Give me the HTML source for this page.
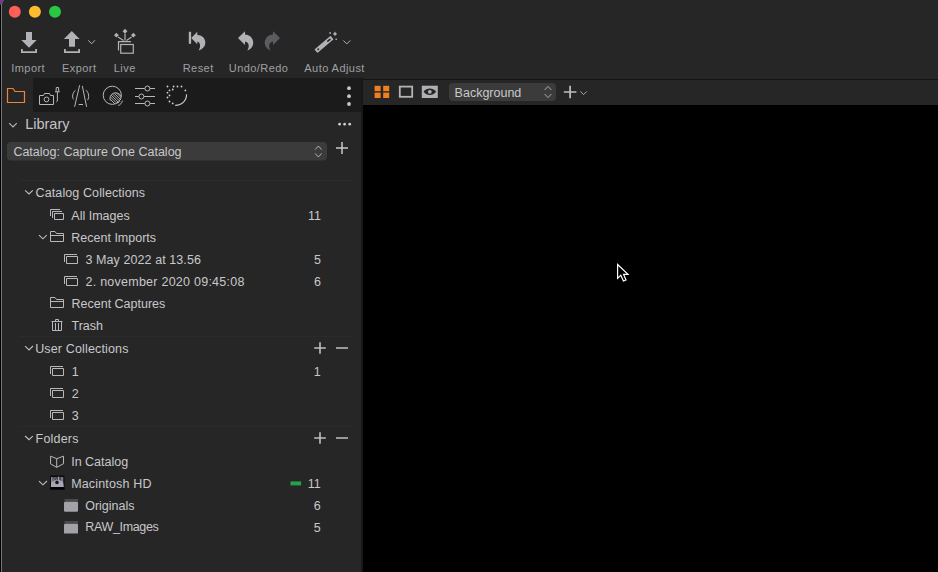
<!DOCTYPE html>
<html><head><meta charset="utf-8">
<style>
html,body{margin:0;padding:0;width:938px;height:572px;overflow:hidden;background:#262626;}
svg{display:block;}
text{font-family:"Liberation Sans",sans-serif;}
.lbl{font-size:11px;fill:#a0a0a4;letter-spacing:0.45px;}
.it{font-size:12.5px;fill:#c8c8cb;}
.ic{fill:none;stroke:#b8b8bc;stroke-width:1;}
</style></head>
<body>
<svg width="938" height="572" viewBox="0 0 938 572">
<!-- backgrounds -->
<rect x="0" y="0" width="938" height="572" fill="#262626"/>
<!-- left window edge -->
<rect x="0" y="5" width="1" height="567" fill="#000"/>
<rect x="1" y="5" width="1" height="567" fill="#74747c"/>
<path d="M0,0 H2.8 Q1,2 0,5.5 Z" fill="#8a2aa8"/>
<path d="M3.5,0 Q1.5,2 1.5,5" fill="none" stroke="#74747c" stroke-width="1"/>
<!-- traffic lights -->
<circle cx="14.8" cy="11.8" r="6" fill="#fe5f57"/>
<circle cx="34.9" cy="11.8" r="6" fill="#febc2e"/>
<circle cx="55" cy="11.8" r="6" fill="#28c840"/>

<!-- toolbar icons -->
<g fill="#b2b2b6">
  <!-- import -->
  <rect x="26" y="32" width="6" height="8.5"/>
  <polygon points="21.3,40 36.7,40 29,47.8"/>
  <path d="M21,49 H22.8 V51.2 H35.2 V49 H37 V53 H21 Z"/>
  <!-- export -->
  <polygon points="71.8,31 63.9,39 79.6,39"/>
  <rect x="69" y="38.5" width="6" height="8.2"/>
  <path d="M64,49 H65.8 V51.2 H78.2 V49 H80 V53 H64 Z"/>
</g>
<path d="M88.3,40.3 L91.6,43.8 L94.9,40.3" fill="none" stroke="#b2b2b6" stroke-width="1"/>
<!-- live -->
<g fill="#b2b2b6" stroke="none">
  <polygon points="125,28.8 127.4,31.3 125,33.8 122.6,31.3"/>
  <polygon points="116.4,32.8 118.8,35.2 116.4,37.6 114,35.2"/>
  <polygon points="133.4,32.8 135.8,35.2 133.4,37.6 131,35.2"/>
</g>
<g stroke="#b2b2b6" stroke-width="1.2" fill="none">
  <path d="M125,33.8 V40.5 M118,37 L123.5,40.5 M131.6,37 L126.5,40.5"/>
  <path d="M118.5,50.5 V41.7 H131"/>
  <rect x="120.7" y="44.5" width="12.6" height="8.7"/>
</g>
<!-- reset -->
<g fill="#b2b2b6">
  <rect x="188.8" y="31.8" width="2.3" height="12"/>
  <path d="M191.2,38 L197.3,31.7 L197.3,35 C203,35 206,39.5 205.2,44 C204.6,47.2 202,49.6 198.7,50.6 C200.8,47 200.6,42.6 197.3,41.6 L197.3,44.3 Z"/>
  <!-- undo -->
  <path d="M238,38 L245,31.2 L245,34.6 C250.5,34.9 253.8,39.3 253.2,43.8 C252.7,47 250.4,49.5 247.3,50.5 C249.6,47.2 249.4,42.4 245,41.6 L245,45 Z"/>
</g>
<!-- redo -->
<path fill="#5c5c60" d="M280,38 L273,31.2 L273,34.6 C267.5,34.9 264.2,39.3 264.8,43.8 C265.3,47 267.6,49.5 270.7,50.5 C268.4,47.2 268.6,42.4 273,41.6 L273,45 Z"/>
<!-- auto adjust wand -->
<g transform="translate(324,44.4) rotate(-40)">
  <rect x="-10.6" y="-2.3" width="21.2" height="4.6" rx="0.8" fill="#b2b2b6"/>
  <rect x="-8.6" y="-0.8" width="2.2" height="1.6" rx="0.8" fill="#262626"/>
  <rect x="4.2" y="-0.8" width="4.4" height="1.6" rx="0.8" fill="#262626"/>
</g>
<path d="M335,31.6 L335.9,33 L337.3,33.9 L335.9,34.8 L335,36.2 L334.1,34.8 L332.7,33.9 L334.1,33 Z" fill="#b2b2b6"/>
<rect x="329.3" y="32.2" width="1.6" height="1.6" fill="#b2b2b6"/>
<rect x="335.5" y="38.6" width="1.4" height="1.4" fill="#b2b2b6"/>
<path d="M343.3,40.4 L346.8,43.9 L350.3,40.4" fill="none" stroke="#b2b2b6" stroke-width="1"/>

<!-- toolbar labels -->
<text class="lbl" x="28.2" y="71.6" text-anchor="middle">Import</text>
<text class="lbl" x="79.2" y="71.6" text-anchor="middle">Export</text>
<text class="lbl" x="124.8" y="71.6" text-anchor="middle">Live</text>
<text class="lbl" x="198.2" y="71.6" text-anchor="middle">Reset</text>
<text class="lbl" x="258.6" y="71.6" text-anchor="middle">Undo/Redo</text>
<text class="lbl" x="334.6" y="71.6" text-anchor="middle">Auto Adjust</text>

<!-- tool tab row -->
<rect x="33" y="78" width="328" height="34" fill="#1b1b1b"/>
<!-- folder tab (selected) -->
<path d="M7.5,102.5 V88.5 H13 L15,91.5 H24.5 V102.5 Z" fill="none" stroke="#ee8236" stroke-width="1.2"/>
<!-- camera + pin -->
<g class="ic" stroke="#c4c4ca">
  <path d="M39.5,104.5 V95.5 H43.5 L44.5,93.5 H49.5 L50.5,95.5 H53.5 V104.5 Z" stroke-linejoin="round"/>
  <circle cx="46.5" cy="99.4" r="2.4"/>
  <path d="M55,91.8 H59.8 M56,91.8 L56.3,87.5 H58.5 L58.8,91.8 M57.4,92 V101 L56.3,101.9"/>
</g>
<!-- lens -->
<g class="ic" stroke="#c4c4ca">
  <path d="M79.6,85.2 L74.6,106.8 M82.3,85.9 L86.6,106.8 M78.7,104.5 H83"/>
  <path d="M75.5,90.2 C72.6,92.5 71.8,97 73.5,99.3 M86,90.2 C88.8,92.5 89.6,97.5 87.5,100.2"/>
</g>
<!-- color -->
<g class="ic" stroke="#c4c4ca">
  <circle cx="112.3" cy="95.3" r="9.1"/>
  <clipPath id="hc"><circle cx="115.7" cy="98.6" r="5.5"/></clipPath>
  <g clip-path="url(#hc)" stroke-width="0.9"><path d="M108,92 L124,108 M108,89.5 L126,107.5 M108,87 L128,107 M108,94.5 L122,108.5 M108,97 L120,109 M111,87.5 L128,104.5 M113.5,87.5 L128,102 M116,87.5 L128,99.5"/></g>
  <path d="M110.3,100.5 A5.7,5.7 0 0 1 121,96.5" />
  <path d="M122.5,100.7 C121.8,103 120.4,104.8 118.2,105.5"/>
</g>
<!-- sliders -->
<g class="ic" stroke="#c4c4ca">
  <path d="M135,88.5 H144.8 M150,88.5 H155 M135,96.5 H138.8 M144,96.5 H155 M135,103.5 H144.8 M150,103.5 H155"/>
  <circle cx="147.4" cy="88.5" r="2.5"/>
  <circle cx="141.4" cy="96.5" r="2.5"/>
  <circle cx="147.4" cy="103.5" r="2.5"/>
</g>
<!-- dotted circle -->
<g fill="#d0d0d6">
  <circle cx="167.5" cy="86.5" r="0.9"/><circle cx="173.6" cy="86.5" r="0.9"/><circle cx="177.5" cy="86.5" r="0.9"/><circle cx="181.5" cy="86.5" r="0.9"/>
  <circle cx="185.4" cy="90.4" r="0.9"/><circle cx="172.7" cy="89.5" r="0.9"/><circle cx="169.5" cy="90.4" r="0.9"/>
  <circle cx="167.5" cy="92.7" r="0.9"/><circle cx="169.5" cy="95.4" r="0.9"/><circle cx="167.5" cy="97.5" r="0.9"/>
  <circle cx="169.5" cy="101.5" r="0.9"/><circle cx="172.7" cy="103.4" r="0.9"/>
</g>
<path d="M186.5,94.3 C186.8,100.5 182,105.4 175.2,105.4" fill="none" stroke="#c8c8ce" stroke-width="1.1"/>
<!-- vertical menu dots -->
<g fill="#c8c8cc"><circle cx="349" cy="88.2" r="1.9"/><circle cx="349" cy="96.2" r="1.9"/><circle cx="349" cy="104" r="1.9"/></g>

<!-- library header -->
<path d="M9.2,123.2 L13,127 L16.8,123.2" fill="none" stroke="#b8b8bc" stroke-width="1.1"/>
<text x="25.2" y="129.2" style="font-size:14.5px;fill:#c2c2c6">Library</text>
<g fill="#d0d0d4"><circle cx="339.6" cy="124.2" r="1.35"/><circle cx="344.6" cy="124.2" r="1.35"/><circle cx="349.7" cy="124.2" r="1.35"/></g>

<!-- catalog dropdown -->
<rect x="7" y="142" width="320" height="18.5" rx="4" fill="#3b3b3b"/>
<text class="it" x="13.4" y="155.9">Catalog: Capture One Catalog</text>
<path d="M315.2,149.6 L318.4,146 L321.6,149.6 M315.2,153.4 L318.4,157 L321.6,153.4" fill="none" stroke="#b0b0b4" stroke-width="1"/>
<path d="M342,142 V154 M336,148 H348" stroke="#c8c8cc" stroke-width="1.5"/>

<!-- separators -->
<g fill="#2b2b2b">
  <rect x="20" y="180" width="333" height="1"/>
  <rect x="20" y="336" width="333" height="1"/>
  <rect x="20" y="426" width="333" height="1"/>
</g>

<!-- catalog collections -->
<g fill="none" stroke="#c0c0c4" stroke-width="1.1">
  <path d="M25.1,190.3 L29,194 L32.8,190.3"/>
  <path d="M39,235.1 L42.9,238.8 L46.7,235.1"/>
  <path d="M25.1,346.1 L29,349.9 L33,346"/>
  <path d="M25.1,436 L29,439.7 L32.8,436.1"/>
  <path d="M39,481.2 L42.9,484.8 L47,481"/>
</g>
<text class="it" x="35.6" y="196.9" letter-spacing="0.1">Catalog Collections</text>

<!-- icons for rows -->
<g class="ic" stroke="#bebec2">
  <!-- all images (stacked) -->
  <path d="M50.5,216 V209.5 H60 M52.5,218 V211.5 H62"/>
  <path d="M54.5,213.5 H63.5 V219.5 H54.5 Z"/>
  <!-- recent imports folder -->
  <path d="M50.5,241.5 V231.5 H55 L56.5,233.5 H63.5 V241.5 Z M50.5,235.5 H63.5"/>
  <!-- 3 may -->
  <path d="M64.5,262 V254.5 H77 M66.5,256.5 H77.5 V263.5 H66.5 Z"/>
  <!-- 2 november -->
  <path d="M64.5,284 V276.5 H77 M66.5,278.5 H77.5 V285.5 H66.5 Z"/>
  <!-- recent captures folder -->
  <path d="M50.5,307.5 V297.5 H55 L56.5,299.5 H63.5 V307.5 Z M50.5,301.5 H63.5"/>
  <!-- trash -->
  <path d="M51.5,321.5 H62.5 M55.5,321.5 V319.5 H58.5 V321.5 M52.5,321.5 V330.5 H61.5 V321.5 M55.5,323 V330 M58.5,323 V330"/>
  <!-- user collections 1,2,3 -->
  <path d="M50.5,374 V366.5 H63 M52.5,368.5 H63.5 V375.5 H52.5 Z"/>
  <path d="M50.5,396 V388.5 H63 M52.5,390.5 H63.5 V397.5 H52.5 Z"/>
  <path d="M50.5,418 V410.5 H63 M52.5,412.5 H63.5 V419.5 H52.5 Z"/>
  <!-- in catalog (book) -->
  <path d="M50.6,456.2 L56.7,458.7 L63.5,456.2 V463.7 L56.7,467.4 L50.6,463.9 Z M56.7,458.7 V467.4" stroke-linejoin="round"/>
</g>
<text class="it" x="71.3" y="219.8">All Images</text>
<text class="it" x="71.3" y="241.6">Recent Imports</text>
<text class="it" x="85.5" y="263.9" letter-spacing="0.08">3 May 2022 at 13.56</text>
<text class="it" x="85.5" y="286.1" letter-spacing="0.25">2. november 2020 09:45:08</text>
<text class="it" x="71.5" y="308">Recent Captures</text>
<text class="it" x="71.5" y="329.5">Trash</text>

<text class="it" x="321" y="219.8" text-anchor="end">11</text>
<text class="it" x="321" y="263.9" text-anchor="end">5</text>
<text class="it" x="321" y="286.1" text-anchor="end">6</text>

<!-- user collections -->
<text class="it" x="35.2" y="353" letter-spacing="0.15">User Collections</text>
<path d="M320,342.2 V353.8 M314.2,348 H325.8 M336,348 H348" stroke="#c0c0c4" stroke-width="1.6"/>
<text class="it" x="71.8" y="376.1">1</text>
<text class="it" x="71.8" y="397.9">2</text>
<text class="it" x="71.8" y="419.6">3</text>
<text class="it" x="320.6" y="376.1" text-anchor="end">1</text>

<!-- folders -->
<text class="it" x="35.6" y="443.1" letter-spacing="0.2">Folders</text>
<path d="M320,432.2 V443.8 M314.2,438 H325.8 M336,438 H348" stroke="#c0c0c4" stroke-width="1.6"/>
<text class="it" x="71.2" y="466.2">In Catalog</text>
<!-- macintosh hd icon -->
<rect x="50" y="475.5" width="14.5" height="14" fill="#0a0a0a"/>
<path d="M51,487 V477 H63.5 V487 Z" fill="#4a4a52"/>
<path d="M50.8,487 L51.5,482 L55,480 H59.5 L63,482 L63.8,487 Z" fill="#a4a4b4"/>
<path d="M51.8,477 V487 M58.6,476.5 V481 M62,477 V487" stroke="#b0b0bc" stroke-width="0.9"/>
<path d="M52.5,480.5 L55.5,477.5 M53,483 L57,479" stroke="#9090a0" stroke-width="0.7"/>
<circle cx="57" cy="482.4" r="1.8" fill="#16161a"/>
<rect x="50" y="487.2" width="14.5" height="2.3" fill="#000"/>
<text class="it" x="71.2" y="488.2" letter-spacing="0.16">Macintosh HD</text>
<rect x="290.5" y="481.4" width="10.6" height="4" fill="#26a04c"/>
<text class="it" x="320.8" y="487.5" text-anchor="end">11</text>
<!-- gray folders -->
<rect x="64.5" y="499" width="13.5" height="2.6" fill="#4a4a4e"/>
<rect x="64" y="501.8" width="14" height="10" rx="1.2" fill="#a2a2a8"/>
<rect x="64.5" y="521" width="13.5" height="2.6" fill="#4a4a4e"/>
<rect x="64" y="523.8" width="14" height="9.8" rx="1.2" fill="#a2a2a8"/>
<text class="it" x="85.2" y="510.2">Originals</text>
<text class="it" x="85.2" y="531.2" letter-spacing="-0.33">RAW_Images</text>
<text class="it" x="320.8" y="509.5" text-anchor="end">6</text>
<text class="it" x="320.8" y="531.6" text-anchor="end">5</text>

<!-- viewer -->
<rect x="361" y="78" width="2" height="494" fill="#171717"/>
<rect x="363" y="79" width="575" height="1" fill="#141414"/>
<rect x="363" y="105" width="575" height="467" fill="#000"/>
<!-- grid icon -->
<g fill="#f0801e">
  <rect x="374.6" y="85.8" width="6" height="5.4"/><rect x="383.2" y="85.8" width="6" height="5.4"/>
  <rect x="374.6" y="92.6" width="6" height="5.4"/><rect x="383.2" y="92.6" width="6" height="5.4"/>
</g>
<rect x="399.8" y="86.6" width="12.4" height="10.2" fill="none" stroke="#b4b4b8" stroke-width="1.8"/>
<rect x="421.8" y="85.7" width="16" height="12.3" fill="#b0b0b4"/>
<path d="M423.5,91.8 C427,87.5 432.6,87.5 436.1,91.8 C432.6,96.1 427,96.1 423.5,91.8 Z" fill="#262626"/>
<circle cx="429.8" cy="91.8" r="1.9" fill="#b0b0b4"/>
<!-- background dropdown -->
<rect x="449" y="83" width="107" height="18" rx="4" fill="#3b3b3b"/>
<text class="it" x="454.6" y="97.2">Background</text>
<path d="M544.6,90 L548,86.4 L551.4,90 M544.6,94 L548,97.6 L551.4,94" fill="none" stroke="#a8a8ac" stroke-width="1"/>
<path d="M570.1,85.8 V98.2 M563.8,92 H576.4" stroke="#c0c0c4" stroke-width="1.7"/>
<path d="M580.4,91.4 L583.6,94.6 L586.8,91.4" fill="none" stroke="#a8a8ac" stroke-width="1"/>

<!-- cursor -->
<path d="M617.6,264.5 V278.4 L620.8,275.2 L623.4,281 L626,280 L623.6,274.4 L628,274.4 Z" fill="#000" stroke="#fff" stroke-width="1.2" stroke-linejoin="miter"/>
</svg>
</body></html>
